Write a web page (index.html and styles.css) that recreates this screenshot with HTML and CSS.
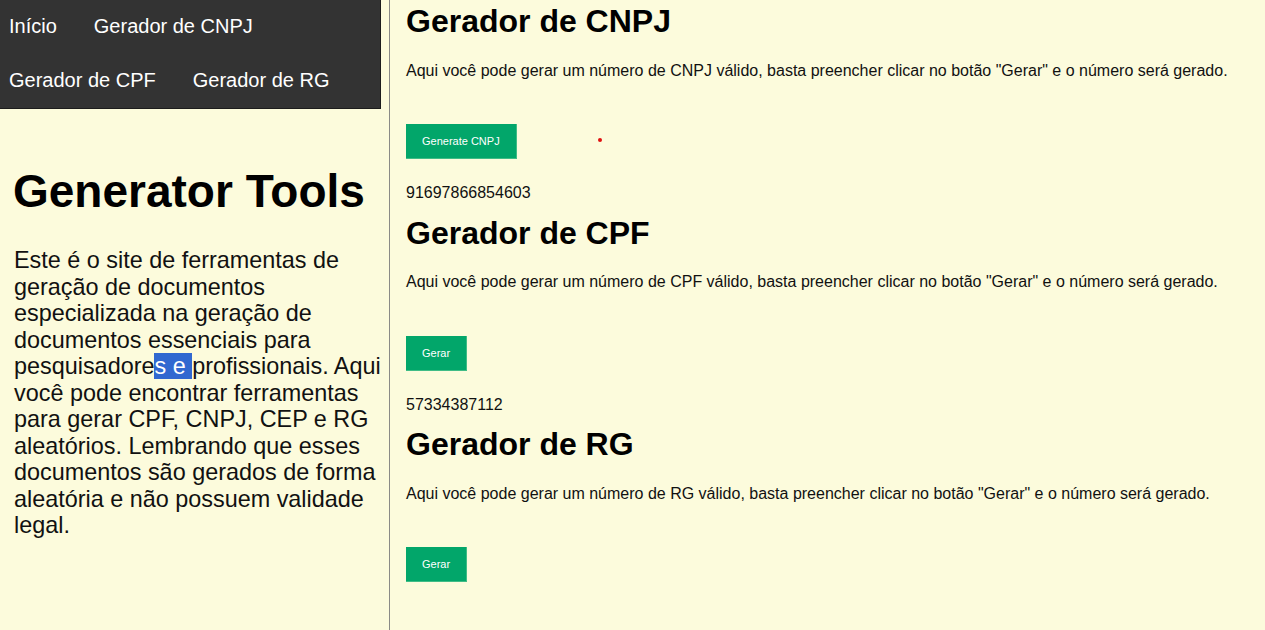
FILE: index.html
```html
<!DOCTYPE html>
<html lang="pt-BR">
<head>
<meta charset="utf-8">
<title>Generator Tools</title>
<link rel="stylesheet" href="styles.css">
</head>
<body>
<div class="page">
  <aside class="sidebar">
    <nav class="nav">
      <a href="#" class="nav-link">Início</a>
      <a href="#" class="nav-link">Gerador de CNPJ</a>
      <a href="#" class="nav-link">Gerador de CPF</a>
      <a href="#" class="nav-link">Gerador de RG</a>
    </nav>
    <h1 class="site-title">Generator Tools</h1>
    <p class="intro">Este é o site de ferramentas de geração de documentos especializada na geração de documentos essenciais para pesquisadore<span class="selected">s e </span>profissionais. Aqui você pode encontrar ferramentas para gerar CPF, CNPJ, CEP e RG aleatórios. Lembrando que esses documentos são gerados de forma aleatória e não possuem validade legal.</p>
  </aside>
  <main class="main">
    <section class="tool">
      <h2 class="tool-title">Gerador de CNPJ</h2>
      <p class="tool-desc">Aqui você pode gerar um número de CNPJ válido, basta preencher clicar no botão "Gerar" e o número será gerado.</p>
      <div class="tool-actions">
        <button class="btn">Generate CNPJ</button>
        <span class="cursor-dot"></span>
      </div>
      <p class="tool-result">91697866854603</p>
    </section>
    <section class="tool">
      <h2 class="tool-title">Gerador de CPF</h2>
      <p class="tool-desc">Aqui você pode gerar um número de CPF válido, basta preencher clicar no botão "Gerar" e o número será gerado.</p>
      <div class="tool-actions">
        <button class="btn">Gerar</button>
      </div>
      <p class="tool-result">57334387112</p>
    </section>
    <section class="tool">
      <h2 class="tool-title">Gerador de RG</h2>
      <p class="tool-desc">Aqui você pode gerar um número de RG válido, basta preencher clicar no botão "Gerar" e o número será gerado.</p>
      <div class="tool-actions">
        <button class="btn">Gerar</button>
      </div>
    </section>
  </main>
</div>
</body>
</html>
```

FILE: styles.css
```css
* {
  box-sizing: border-box;
}

html, body {
  margin: 0;
  padding: 0;
  background: #fcfbdc;
  font-family: "Liberation Sans", Arial, sans-serif;
  color: #111;
}

.page {
  display: flex;
  min-height: 100vh;
}

.sidebar {
  width: 390px;
  flex: 0 0 390px;
  border-right: 1px solid #8a8a86;
  padding-bottom: 20px;
}

.nav {
  width: 381px;
  background: #333333;
  border-right: 1px solid #1c1c1c;
  border-bottom: 1px solid #1c1c1c;
  display: flex;
  flex-wrap: wrap;
  column-gap: 37px;
  padding-left: 9px;
}

.nav-link {
  color: #ffffff;
  text-decoration: none;
  font-size: 20px;
  line-height: 23px;
  height: 54px;
  padding-top: 14.6px;
}

.site-title {
  font-size: 46px;
  font-weight: bold;
  color: #000;
  margin: 56px 0 0 13px;
  line-height: 53px;
}

.intro {
  font-size: 23.4px;
  line-height: 26.5px;
  margin: 29px 2px 0 14px;
  color: #111;
}

.selected {
  background: #3168d0;
  color: #fff;
}

.main {
  flex: 1;
  padding: 3px 16px 0 16px;
}

.tool {
  margin-bottom: 12px;
}

.tool-title {
  font-size: 32px;
  line-height: 36.8px;
  font-weight: bold;
  color: #000;
  margin: 0 0 22px;
}

.tool-desc {
  font-size: 16px;
  line-height: 18.4px;
  margin: 0 0 44px;
}

.tool-actions {
  display: flex;
  align-items: center;
}

.btn {
  font-family: "Liberation Sans", Arial, sans-serif;
  font-size: 11px;
  color: #fff;
  background: #02a66a;
  border: none;
  border-right: 1px solid #3fbc86;
  border-bottom: 1px solid #3fbc86;
  height: 35px;
  padding: 0 16px;
  cursor: pointer;
}

.cursor-dot {
  width: 4px;
  height: 4px;
  border-radius: 50%;
  background: #e01010;
  margin-left: 81px;
  margin-bottom: 4px;
}

.tool-result {
  font-size: 16px;
  line-height: 18.4px;
  margin: 25px 0 0;
}
```
